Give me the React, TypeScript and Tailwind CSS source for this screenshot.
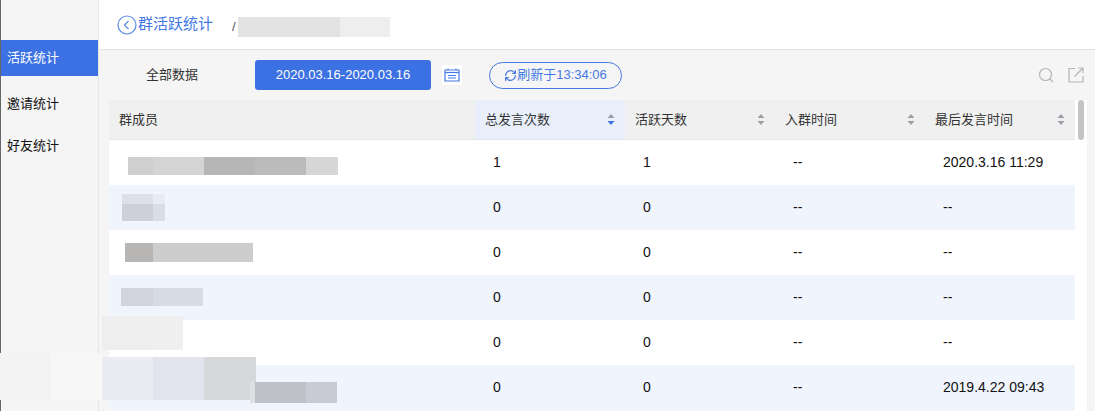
import { RefreshCw } from 'lucide-react'

const font = "font-['Liberation_Sans','Noto_Sans_CJK_SC',sans-serif]"

const rows = [
  { count: '1', days: '1', joined: '--', last: '2020.3.16 11:29' },
  { count: '0', days: '0', joined: '--', last: '--' },
  { count: '0', days: '0', joined: '--', last: '--' },
  { count: '0', days: '0', joined: '--', last: '--' },
  { count: '0', days: '0', joined: '--', last: '--' },
  { count: '0', days: '0', joined: '--', last: '2019.4.22 09:43' },
]

// mosaic patches covering member names, one set per row
const patches: { x: number; y: number; w: number; h: number; c: string }[][] = [
  [
    { x: 128, y: 157, w: 25, h: 18, c: '#cfcfcf' },
    { x: 153, y: 157, w: 51, h: 18, c: '#d4d4d4' },
    { x: 204, y: 157, w: 51, h: 18, c: '#b6b6b7' },
    { x: 255, y: 157, w: 51, h: 18, c: '#bbbbbb' },
    { x: 306, y: 157, w: 32, h: 18, c: '#d5d6d5' },
  ],
  [
    { x: 122, y: 194, w: 31, h: 10, c: '#dde0e8' },
    { x: 153, y: 194, w: 12, h: 10, c: '#e8ebf3' },
    { x: 122, y: 204, w: 31, h: 17, c: '#cdd0d9' },
    { x: 153, y: 204, w: 12, h: 17, c: '#d8dee8' },
  ],
  [
    { x: 125, y: 243, w: 28, h: 19, c: '#b7b6b4' },
    { x: 153, y: 243, w: 100, h: 19, c: '#cdcdcd' },
  ],
  [
    { x: 121, y: 288, w: 32, h: 18, c: '#d1d4dc' },
    { x: 153, y: 288, w: 50, h: 18, c: '#d7dbe3' },
  ],
]

function SortIcon({ active }: { active?: boolean }) {
  return (
    <svg width="8" height="13" viewBox="0 0 8 13" className="shrink-0">
      <path d="M4 1 L7.5 5 H0.5 Z" fill="#9a9ea6" />
      <path d="M4 12 L7.5 8 H0.5 Z" fill={active ? '#3c71e3' : '#9a9ea6'} />
    </svg>
  )
}

function HeaderCell({ label, className, active }: { label: string; className: string; active?: boolean }) {
  return (
    <div className={`flex items-center justify-between pl-[10px] pr-[10px] ${className}`}>
      <span>{label}</span>
      <SortIcon active={active} />
    </div>
  )
}

export default function App() {
  return (
    <div className={`relative flex h-[411px] w-[1095px] overflow-hidden bg-[#f5f5f5] text-[13px] text-[#333] ${font}`}>
      {/* Sidebar */}
      <aside className="h-[411px] w-[99px] shrink-0 border-l border-r border-l-[#666] border-r-[#e6e6e6] pt-[40px]">
        <div className="flex h-[36px] items-center pl-[6px] text-white bg-[#3c71e3]">活跃统计</div>
        <div className="flex h-[42px] items-center pl-[6px] pt-[14px] text-[#111]">邀请统计</div>
        <div className="flex h-[42px] items-center pl-[6px] pt-[14px] text-[#111]">好友统计</div>
      </aside>

      <main className="min-w-0 flex-1">
        {/* Title bar */}
        <header className="flex h-[50px] items-center border-b border-[#e3e3e3] bg-white pl-[18px]">
          <svg width="20" height="20" viewBox="0 0 20 20" fill="none" stroke="#5b8be8" strokeWidth="1.2" className="mr-[1px]">
            <circle cx="10" cy="10" r="9" />
            <path d="M11.5 6 L7.5 10 L11.5 14" />
          </svg>
          <span className="text-[15px] text-[#4478e4]">群活跃统计</span>
          <span className="ml-[19px] mt-[4px] text-[#555]">/</span>
        </header>

        {/* Toolbar */}
        <div className="flex h-[50px] items-center pl-[47px]">
          <span className="w-[109px]">全部数据</span>
          <div className="flex h-[30px] w-[176px] items-center justify-center rounded-[3px] bg-[#3c71e3] text-white">
            2020.03.16-2020.03.16
          </div>
          <div className="ml-[11px] flex h-[20px] w-[20px] items-center justify-center bg-white">
            <svg width="16" height="14" viewBox="0 0 16 14" fill="none" stroke="#4478e4" strokeWidth="1.2">
              <path d="M1 2 H15 V13 H1 Z" />
              <path d="M1 4.5 H15" />
              <path d="M4 7.5 H12 M4 10 H12" />
              <path d="M4 0.5 V2 M12 0.5 V2" />
            </svg>
          </div>
          <div className="ml-[27px] flex h-[27px] w-[133px] items-center justify-center rounded-full border border-[#4478e4] text-[#4478e4]">
            <RefreshCw size={13} strokeWidth={2.2} />
            <span>刷新于13:34:06</span>
          </div>
          <div className="ml-auto flex items-center gap-[14px] pr-[11px]">
            <svg width="16" height="16" viewBox="0 0 16 16" fill="none" stroke="#b5b5b5" strokeWidth="1.2">
              <circle cx="7.5" cy="7.5" r="6" />
              <path d="M12 12 L15 15" />
            </svg>
            <svg width="16" height="16" viewBox="0 0 16 16" fill="none" stroke="#b5b5b5" strokeWidth="1.2">
              <path d="M7 1.5 H1 V15 H15 V9" />
              <path d="M6.5 9.5 L15 1 M10 1 H15 V6" />
            </svg>
          </div>
        </div>

        {/* Table */}
        <div className="ml-[10px] flex w-[978px]">
          <div className="w-[966px] shrink-0">
            <div className="flex h-[40px] border-b border-[#e6e6e6] bg-[#f0f0f0]">
              <div className="flex w-[366px] items-center pl-[10px]">群成员</div>
              <HeaderCell label="总发言次数" className="w-[150px] bg-[#e8effb]" active />
              <HeaderCell label="活跃天数" className="w-[150px]" />
              <HeaderCell label="入群时间" className="w-[150px]" />
              <HeaderCell label="最后发言时间" className="w-[150px]" />
            </div>
            {rows.map((row, i) => (
              <div key={i} className={`flex h-[45px] items-center ${i % 2 ? 'bg-[#f0f4fd]' : 'bg-white'} text-[14px] text-[#111]`}>
                <div className="w-[366px]" />
                <div className="w-[150px] pl-[18px]">{row.count}</div>
                <div className="w-[150px] pl-[18px]">{row.days}</div>
                <div className="w-[150px] pl-[18px]">{row.joined}</div>
                <div className="w-[150px] pl-[18px]">{row.last}</div>
              </div>
            ))}
          </div>
          <div className="h-[320px] w-[12px] bg-white">
            <div className="ml-[3px] h-[40px] w-[6px] rounded-full bg-[#c4c4c4]" />
          </div>
        </div>
      </main>

      {/* Redaction mosaics sit over the page */}
      {patches.flat().map((p, i) => (
        <div
          key={i}
          className="absolute"
          style={{ left: p.x, top: p.y, width: p.w, height: p.h, backgroundColor: p.c }}
        />
      ))}
      <div className="absolute left-[238px] top-[17px] flex h-[20px]">
        <div className="w-[102px] bg-[#e3e3e3]" />
        <div className="w-[50px] bg-[#eeeeee]" />
      </div>
      <div className="absolute left-[102px] top-[316px] flex h-[34px]">
        <div className="w-[51px] bg-[#eeeeee]" />
        <div className="w-[30px] bg-[#efefef]" />
      </div>
      <div className="absolute left-0 top-[353px] h-[47px] w-[51px] bg-[#f3f3f3]" />
      <div className="absolute left-[51px] top-[353px] h-[47px] w-[51px] bg-[#f7f7f7]" />
      <div className="absolute left-[102px] top-[357px] flex h-[43px]">
        <div className="w-[51px] bg-[#e9ecf1]" />
        <div className="w-[51px] bg-[#e1e4ec]" />
        <div className="w-[52px] bg-[#d7d8dc]" />
      </div>
      <div className="absolute left-[250px] top-[382px] flex h-[21px]">
        <div className="w-[5px] bg-[#dfe0e4]" />
        <div className="w-[51px] bg-[#bfc1c9]" />
        <div className="w-[31px] bg-[#c8cbd3]" />
      </div>
    </div>
  )
}
